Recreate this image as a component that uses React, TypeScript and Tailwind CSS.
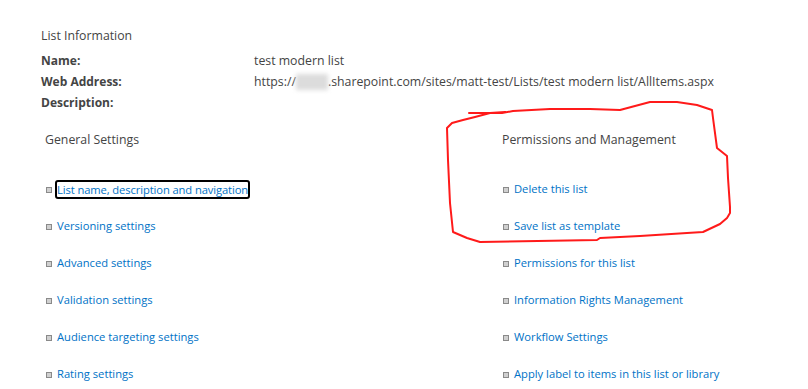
import React from "react";

const leftLinks = [
  "List name, description and navigation",
  "Versioning settings",
  "Advanced settings",
  "Validation settings",
  "Audience targeting settings",
  "Rating settings",
];

const rightLinks = [
  "Delete this list",
  "Save list as template",
  "Permissions for this list",
  "Information Rights Management",
  "Workflow Settings",
  "Apply label to items in this list or library",
];

function Bullet() {
  return (
    <span className="inline-block w-[6px] h-[6px] border border-[#8a8a8a] bg-[#d0d0d0] shrink-0" />
  );
}

function LinkRow({ text, focused }: { text: string; focused?: boolean }) {
  return (
    <div className="h-[37px] flex items-center text-[11.2px]">
      <span className="ml-[1px] mr-[5px] flex items-center">
        <Bullet />
      </span>
      {focused ? (
        <span className="border-2 border-black rounded-[3px] pl-0 pr-0 leading-[15px] -ml-[2px] tracking-[-0.1px]">
          <a className="text-[#0072c6] no-underline">{text}</a>
        </span>
      ) : (
        <a className="text-[#0072c6] no-underline">{text}</a>
      )}
    </div>
  );
}

export default function App() {
  return (
    <div
      className="relative w-[808px] h-[389px] bg-white overflow-hidden text-[#444444]"
      style={{ fontFamily: '"Open Sans", "Segoe UI", Arial, sans-serif' }}
    >
      <div className="pt-[26px] pl-[41px] text-[12px]">
        <div className="text-[12.3px] leading-[20px] text-[#444]">List Information</div>
        <div className="mt-[4px] grid grid-cols-[213px_1fr] leading-[21px]">
          <div className="font-bold">Name:</div>
          <div className="text-[12.3px]">test modern list</div>
          <div className="font-bold">Web Address:</div>
          <div className="flex items-center text-[12.3px]">
            <span>https://</span>
            <span className="inline-block w-[32px] h-[16px] bg-[#dcdcdc] blur-[2px]" />
            <span>.sharepoint.com/sites/matt-test/Lists/test modern list/AllItems.aspx</span>
          </div>
          <div className="font-bold">Description:</div>
          <div />
        </div>
        <div className="mt-[17px] flex">
          <div className="w-[461px] pl-[4px]">
            <div className="text-[12.3px] leading-[20px] text-[#444]">General Settings</div>
            <div className="mt-[21px]">
              {leftLinks.map((t, i) => (
                <LinkRow key={t} text={t} focused={i === 0} />
              ))}
            </div>
          </div>
          <div className="flex-1">
            <div className="text-[12.3px] leading-[20px] text-[#444]">Permissions and Management</div>
            <div className="mt-[21px]">
              {rightLinks.map((t) => (
                <LinkRow key={t} text={t} />
              ))}
            </div>
          </div>
        </div>
      </div>
      <svg
        className="absolute inset-0 pointer-events-none"
        width="808"
        height="389"
        viewBox="0 0 808 389"
      >
        <path
          d="M469,113 L502,113 L513,111 L550,109 L590,109 L620,110 L650,102 L677,102 L697,105 L712,110 L713,118 L717,148 L727,156 L728,178 L730,207 L730,213 L727,218 L720,224 L703,232 L687,233 L640,236 L600,238 L597,240 L480,242 L467,238 L453,232 L450,203 L448,160 L447,128 L452,123 L463,120 L475,117 L490,113 L505,112"
          fill="none"
          stroke="#ff1a1a"
          strokeWidth="2"
          strokeLinejoin="round"
          strokeLinecap="round"
        />
      </svg>
    </div>
  );
}
